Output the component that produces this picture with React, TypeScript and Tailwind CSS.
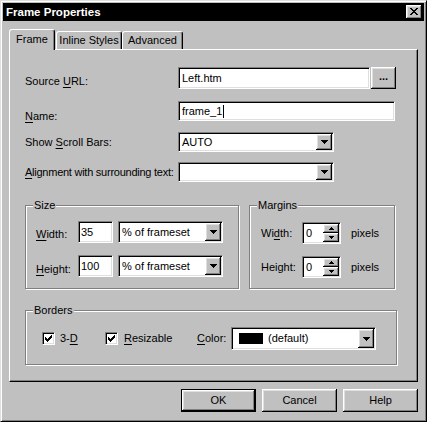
import type { ReactNode } from 'react'

const raised =
  'bg-[#c0c0c0] shadow-[inset_-1px_-1px_0_#000,inset_1px_1px_0_#fff,inset_-2px_-2px_0_#808080,inset_2px_2px_0_#dfdfdf]'
const sunken =
  'border border-t-[#808080] border-l-[#808080] border-r-white border-b-white p-px shadow-[inset_1px_1px_0_#000,inset_-1px_-1px_0_#dfdfdf]'
const etched = 'border border-[#808080] shadow-[1px_1px_0_#fff,inset_1px_1px_0_#fff]'

function K({ children }: { children: string }) {
  return <span className="underline underline-offset-[2px]">{children}</span>
}

function DownArrow() {
  return (
    <svg width="7" height="4" viewBox="0 0 7 4" shapeRendering="crispEdges">
      <path d="M0 0h7v1H0zM1 1h5v1H1zM2 2h3v1H2zM3 3h1v1H3z" fill="#000" />
    </svg>
  )
}

function SpinArrow({ up }: { up?: boolean }) {
  return (
    <svg width="5" height="3" viewBox="0 0 5 3" shapeRendering="crispEdges">
      <path
        d={up ? 'M2 0h1v1H2zM1 1h3v1H1zM0 2h5v1H0z' : 'M0 0h5v1H0zM1 1h3v1H1zM2 2h1v1H2z'}
        fill="#000"
      />
    </svg>
  )
}

function Check() {
  return (
    <svg width="7" height="7" viewBox="0 0 7 7" shapeRendering="crispEdges">
      <path
        d="M6 0h1v1H6zM5 1h2v1H5zM0 2h1v1H0zM4 2h3v1H4zM0 3h2v1H0zM3 3h3v1H3zM0 4h5v1H0zM1 5h3v1H1zM2 6h1v1H2z"
        fill="#000"
      />
    </svg>
  )
}

function Combo({ className, children }: { className: string; children?: ReactNode }) {
  return (
    <div className={`${sunken} flex bg-white ${className}`}>
      <div className="flex flex-1 items-center overflow-hidden whitespace-nowrap pl-[2px]">{children}</div>
      <div className={`${raised} flex w-[16px] items-center justify-center`}>
        <DownArrow />
      </div>
    </div>
  )
}

function Spin() {
  return (
    <div className={`${sunken} flex h-[22px] w-[39px] bg-white`}>
      <div className="flex flex-1 items-center pl-[2px]">0</div>
      <div className="flex w-[16px] flex-col">
        <div className={`${raised} flex flex-1 items-center justify-center`}>
          <SpinArrow up />
        </div>
        <div className={`${raised} flex flex-1 items-center justify-center`}>
          <SpinArrow />
        </div>
      </div>
    </div>
  )
}

function CheckBox() {
  return (
    <div className={`${sunken} flex h-[13px] w-[13px] items-center justify-center bg-white`}>
      <Check />
    </div>
  )
}

function Group({ title, className, children }: { title: string; className: string; children: ReactNode }) {
  return (
    <div className={`${etched} ${className}`}>
      <div className="-mt-[7px] ml-[7px] w-fit bg-[#c0c0c0] px-px">{title}</div>
      {children}
    </div>
  )
}

export default function App() {
  return (
    <div className="h-[422px] w-[427px] bg-[#c0c0c0] font-['Liberation_Sans',Arial,sans-serif] text-[11px] leading-[13px] text-black">
      <div className="flex h-full flex-col border border-b-black border-l-[#dfdfdf] border-r-black border-t-[#dfdfdf] p-[2px] shadow-[inset_1px_1px_0_#fff,inset_-1px_-1px_0_#808080]">
        {/* TITLE */}
        <div className="flex h-[18px] items-center justify-between bg-black pl-[3px] pr-[2px]">
          <span className="text-[11.5px] font-bold text-white">Frame Properties</span>
          <div className={`${raised} h-[14px] w-[16px] pl-[4px] pt-[3px]`}>
            <svg width="8" height="7" viewBox="0 0 8 7" shapeRendering="crispEdges" className="block">
              <path
                d="M0 0h2v1H0zM6 0h2v1H6zM1 1h2v1H1zM5 1h2v1H5zM2 2h4v1H2zM3 3h2v1H3zM2 4h4v1H2zM1 5h2v1H1zM5 5h2v1H5zM0 6h2v1H0zM6 6h2v1H6z"
                fill="#000"
              />
            </svg>
          </div>
        </div>

        <div className="px-[6px]">
          {/* TABS */}
          <div className="mt-[8px] flex h-[20px] items-end">
            <div className="relative z-10 -mb-px flex h-[21px] w-[46px] items-center justify-center rounded-t-[3px] border-l border-r border-t border-l-white border-r-black border-t-white bg-[#c0c0c0] pb-px shadow-[inset_-1px_0_0_#808080]">
              Frame
            </div>
            <div className="ml-px flex h-[18px] w-[66px] items-center justify-center rounded-t-[3px] border-l border-r border-t border-l-white border-r-black border-t-white shadow-[inset_-1px_0_0_#808080]">
              Inline Styles
            </div>
            <div className="flex h-[18px] w-[61px] items-center justify-center rounded-t-[3px] border-l border-r border-t border-l-white border-r-black border-t-white shadow-[inset_-1px_0_0_#808080]">
              Advanced
            </div>
          </div>

          {/* PANEL */}
          <div className="flex h-[333px] flex-col border border-b-black border-l-white border-r-black border-t-white pl-[15px] pt-[17px] shadow-[inset_-1px_-1px_0_#808080]">
            <div className="flex h-[22px] items-start">
              <div className="mt-[8px] w-[153px]">
                Source <K>U</K>RL:
              </div>
              <div className={`${sunken} flex h-[22px] w-[192px] items-center bg-white pl-[3px]`}>Left.htm</div>
              <div className={`${raised} ml-px flex h-[22px] w-[25px] items-center justify-center pb-[3px] font-bold`}>
                ...
              </div>
            </div>

            <div className="mt-[12px] flex h-[20px] items-start">
              <div className="mt-[9px] w-[153px]">
                <K>N</K>ame:
              </div>
              <div className={`${sunken} flex h-[20px] w-[217px] items-center bg-white pl-[3px]`}>
                frame_1
                <span className="ml-px h-[13px] w-px bg-black" />
              </div>
            </div>

            <div className="mt-[11px] flex h-[20px] items-center">
              <div className="w-[153px]">
                Show <K>S</K>croll Bars:
              </div>
              <Combo className="h-[20px] w-[156px]">AUTO</Combo>
            </div>

            <div className="mt-[10px] flex h-[20px] items-center">
              <div className="w-[153px] whitespace-nowrap tracking-[-0.25px]">
                <K>A</K>lignment with surrounding text:
              </div>
              <Combo className="h-[20px] w-[156px]" />
            </div>

            {/* SIZE / MARGINS */}
            <div className="mt-[23px] flex items-start">
              <Group title="Size" className="h-[84px] w-[214px]">
                <div className="mt-[9px] flex items-start pl-[10px]">
                  <div className="mt-[7px] w-[42px]">
                    <K>W</K>idth:
                  </div>
                  <div className={`${sunken} flex h-[22px] w-[35px] items-center bg-white pl-[2px]`}>35</div>
                  <Combo className="ml-[5px] h-[22px] w-[105px]">% of frameset</Combo>
                </div>
                <div className="mt-[12px] flex items-start pl-[10px]">
                  <div className="mt-[8px] w-[42px]">
                    <K>H</K>eight:
                  </div>
                  <div className={`${sunken} flex h-[22px] w-[35px] items-center bg-white pl-[2px]`}>100</div>
                  <Combo className="ml-[5px] h-[22px] w-[105px]">% of frameset</Combo>
                </div>
              </Group>

              <Group title="Margins" className="ml-[10px] h-[84px] w-[146px]">
                <div className="mt-[10px] flex items-center pl-[11px]">
                  <div className="w-[41px]">
                    Wi<K>d</K>th:
                  </div>
                  <Spin />
                  <span className="ml-[10px]">pixels</span>
                </div>
                <div className="mt-[12px] flex items-center pl-[11px]">
                  <div className="w-[41px]">Height:</div>
                  <Spin />
                  <span className="ml-[10px]">pixels</span>
                </div>
              </Group>
            </div>

            {/* BORDERS */}
            <Group title="Borders" className="mt-[21px] h-[55px] w-[372px]">
              <div className="mt-[10px] flex h-[23px] items-center pl-[16px]">
                <div className="flex w-[63px] items-center gap-[5px]">
                  <CheckBox />
                  <span>
                    3-<K>D</K>
                  </span>
                </div>
                <div className="flex w-[92px] items-center gap-[6px]">
                  <CheckBox />
                  <span>
                    <K>R</K>esizable
                  </span>
                </div>
                <div className="w-[34px]">
                  <K>C</K>olor:
                </div>
                <Combo className="h-[23px] w-[145px]">
                  <span className="ml-[4px] h-[11px] w-[24px] bg-black" />
                  <span className="ml-[5px]">(default)</span>
                </Combo>
              </div>
            </Group>
          </div>

          {/* BUTTONS */}
          <div className="mt-[7px] flex justify-end gap-[6px]">
            <div className="h-[23px] w-[75px] border border-black">
              <div className={`${raised} flex h-full items-center justify-center`}>OK</div>
            </div>
            <div className={`${raised} flex h-[23px] w-[75px] items-center justify-center`}>Cancel</div>
            <div className={`${raised} flex h-[23px] w-[75px] items-center justify-center`}>Help</div>
          </div>
        </div>
      </div>
    </div>
  )
}
